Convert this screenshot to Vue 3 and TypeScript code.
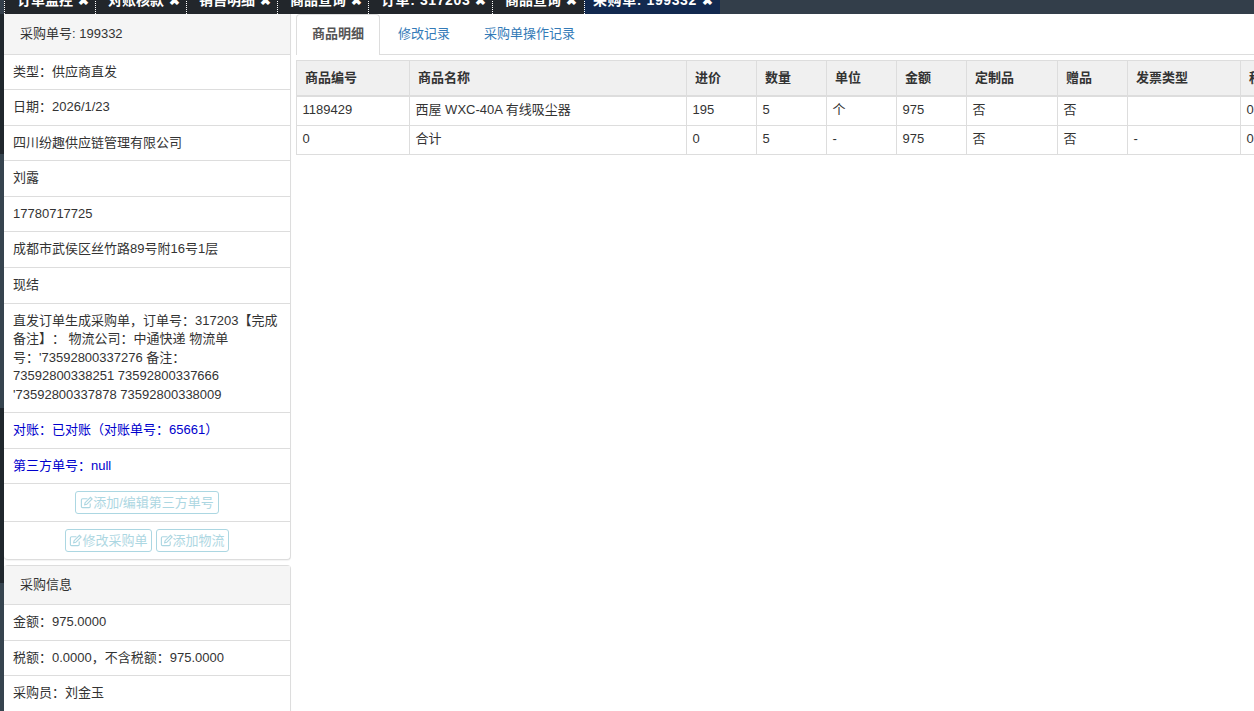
<script setup lang="ts">
interface Row { text: string; blue?: boolean }
const tabs = ['订单监控', '对账核款', '销售明细', '商品查询', '订单: 317203', '商品查询', '采购单: 199332']
const rowsA: Row[] = [
  { text: '类型：供应商直发' },
  { text: '日期：2026/1/23' },
  { text: '四川纷趣供应链管理有限公司' },
  { text: '刘露' },
  { text: '17780717725' },
  { text: '成都市武侯区丝竹路89号附16号1层' },
  { text: '现结' },
  { text: "直发订单生成采购单，订单号：317203【完成备注】： 物流公司：中通快递 物流单号：'73592800337276 备注：73592800338251 73592800337666 '73592800337878 73592800338009" },
  { text: '对账：已对账（对账单号：65661）', blue: true },
  { text: '第三方单号：null', blue: true },
]
const rowsB: Row[] = [
  { text: '金额：975.0000' },
  { text: '税额：0.0000，不含税额：975.0000' },
  { text: '采购员：刘金玉' },
]
const cols = [113, 277, 70, 70, 70, 70, 91, 70, 113, 70]
const heads = ['商品编号', '商品名称', '进价', '数量', '单位', '金额', '定制品', '赠品', '发票类型', '税率']
const body = [
  ['1189429', '西屋 WXC-40A 有线吸尘器', '195', '5', '个', '975', '否', '否', '', '0'],
  ['0', '合计', '0', '5', '-', '975', '否', '否', '-', '0'],
]
</script>

<template>
  <div class="page">
    <header class="tabbar">
      <div class="tabstrip">
        <div v-for="(t, i) in tabs" :key="i" class="toptab" :class="{ active: i === tabs.length - 1 }">
          <span>{{ t }}</span><b>✖</b>
        </div>
      </div>
    </header>
    <div class="main">
      <div class="gutter"></div>
      <aside class="side">
        <section class="panel">
          <div class="phead">采购单号: 199332</div>
          <div v-for="(r, i) in rowsA" :key="i" class="item" :class="{ blue: r.blue }">{{ r.text }}</div>
          <div class="item btns wide">
            <button class="btn" disabled>
              <svg viewBox="0 0 14 14"><path d="M11 8v3.2a1.3 1.3 0 0 1-1.3 1.3H2.8a1.3 1.3 0 0 1-1.3-1.3V4.3A1.3 1.3 0 0 1 2.8 3H8" fill="none" stroke="currentColor" stroke-width="1.2"/><path d="M5 9.5l.5-2.3L11.3 1.4l1.8 1.8L7.3 9z" fill="none" stroke="currentColor" stroke-width="1.2"/></svg>添加/编辑第三方单号
            </button>
          </div>
          <div class="item btns">
            <button class="btn" disabled>
              <svg viewBox="0 0 14 14"><path d="M11 8v3.2a1.3 1.3 0 0 1-1.3 1.3H2.8a1.3 1.3 0 0 1-1.3-1.3V4.3A1.3 1.3 0 0 1 2.8 3H8" fill="none" stroke="currentColor" stroke-width="1.2"/><path d="M5 9.5l.5-2.3L11.3 1.4l1.8 1.8L7.3 9z" fill="none" stroke="currentColor" stroke-width="1.2"/></svg>修改采购单
            </button>
            <button class="btn" disabled>
              <svg viewBox="0 0 14 14"><path d="M11 8v3.2a1.3 1.3 0 0 1-1.3 1.3H2.8a1.3 1.3 0 0 1-1.3-1.3V4.3A1.3 1.3 0 0 1 2.8 3H8" fill="none" stroke="currentColor" stroke-width="1.2"/><path d="M5 9.5l.5-2.3L11.3 1.4l1.8 1.8L7.3 9z" fill="none" stroke="currentColor" stroke-width="1.2"/></svg>添加物流
            </button>
          </div>
        </section>
        <section class="panel second">
          <div class="phead">采购信息</div>
          <div v-for="(r, i) in rowsB" :key="i" class="item">{{ r.text }}</div>
        </section>
      </aside>
      <main class="content">
        <nav class="navtabs">
          <a class="ntab on">商品明细</a>
          <a class="ntab">修改记录</a>
          <a class="ntab">采购单操作记录</a>
        </nav>
        <div class="tablewrap">
          <table>
            <colgroup><col v-for="(c, i) in cols" :key="i" :style="{ width: c + 'px' }" /></colgroup>
            <thead><tr><th v-for="h in heads" :key="h">{{ h }}</th></tr></thead>
            <tbody>
              <tr v-for="(r, i) in body" :key="i"><td v-for="(c, j) in r" :key="j">{{ c }}</td></tr>
            </tbody>
          </table>
        </div>
      </main>
    </div>
  </div>
</template>

<style>
html, body { margin: 0; height: 100%; overflow: hidden; background: #fff; }
</style>

<style scoped>
.page {
  width: 1254px;
  height: 711px;
  overflow: hidden;
  font: 13px/1.42857 "Liberation Sans", "Noto Sans CJK SC", sans-serif;
  text-spacing-trim: space-all;
  color: #333;
  background: #fff;
}
.tabbar { height: 14px; overflow: hidden; background: #333e4a; }
.tabstrip { display: flex; margin-top: -11px; padding-left: 4px; }
.toptab {
  height: 25px;
  line-height: 23px;
  padding: 0 0 0 12px;
  background: #22262b;
  color: #fff;
  font-size: 14px;
  font-weight: 700;
  white-space: nowrap;
  box-sizing: border-box;
  border-left: 1px dotted #fff;
  width: 91px;
}
.toptab:nth-child(5) { width: 124px; }
.toptab:nth-child(5) span, .toptab.active span { letter-spacing: .6px; }
.toptab:nth-child(6) { width: 92px; }
.toptab.active { background: #12294f; width: 136px; padding-left: 8px; }
.toptab b { margin-left: 5px; font-size: 13px; }
.main { display: flex; height: 697px; }
.gutter {
  width: 4px;
  flex: none;
  background: linear-gradient(to bottom,
    #20272d 0, #20272d 140px,
    #36444f 140px, #36444f 394px,
    #20272d 394px, #20272d 569px,
    #36444f 569px, #36444f 100%);
}
.side { width: 287px; flex: none; }
.panel {
  border: 1px solid #ddd;
  border-top: 0;
  border-left: 0;
  border-radius: 0 0 4px 4px;
  box-shadow: 0 1px 1px rgba(0, 0, 0, .05);
  background: #fff;
}
.panel.second { margin-top: 5px; border-radius: 4px 4px 0 0; border-top: 1px solid #ddd; }
.phead { padding: 11px 16px 10px; background: #f5f5f5; border-bottom: 1px solid #ddd; }
.second .phead { padding: 9.5px 16px; }
.item { padding: 8px 9px; border-bottom: 1px solid #ddd; }
.item:last-child { border-bottom: 0; }
.item.blue { color: #0000cd; }
.btns { padding: 7px 9px; display: flex; justify-content: center; gap: 4px; }
.btn {
  display: flex;
  align-items: center;
  height: 23px;
  padding: 0 3px;
  border: 1px solid #5bb0c6;
  border-radius: 3px;
  background: #fff;
  color: #5bb0c6;
  opacity: .5;
  font: inherit;
  white-space: nowrap;
}
.wide .btn { padding: 0 4px; }
.btn svg { width: 13px; height: 13px; }
.content { flex: 1; min-width: 0; margin-left: 5px; overflow: hidden; }
.navtabs { display: flex; height: 40px; border-bottom: 1px solid #ddd; }
.ntab {
  padding: 10px 15px;
  margin-right: 2px;
  color: #337ab7;
  border: 1px solid transparent;
  border-bottom: 0;
  height: 41px;
  box-sizing: border-box;
}
.ntab.on {
  color: #555;
  font-weight: 700;
  background: #fff;
  border-color: #ddd;
  border-radius: 4px 4px 0 0;
}
.tablewrap { margin-top: 5px; overflow: hidden; }
table { border-collapse: collapse; table-layout: fixed; width: 1014px; }
th {
  height: 34px;
  padding: 0 8px;
  text-align: left;
  background: #f0f0f0;
  border: 1px solid #ddd;
  border-bottom: 2px solid #ddd;
  color: #333;
  white-space: nowrap;
}
td { height: 29px; padding: 0 6px 0 5.5px; border: 1px solid #ddd; white-space: nowrap; box-sizing: border-box; }
</style>
